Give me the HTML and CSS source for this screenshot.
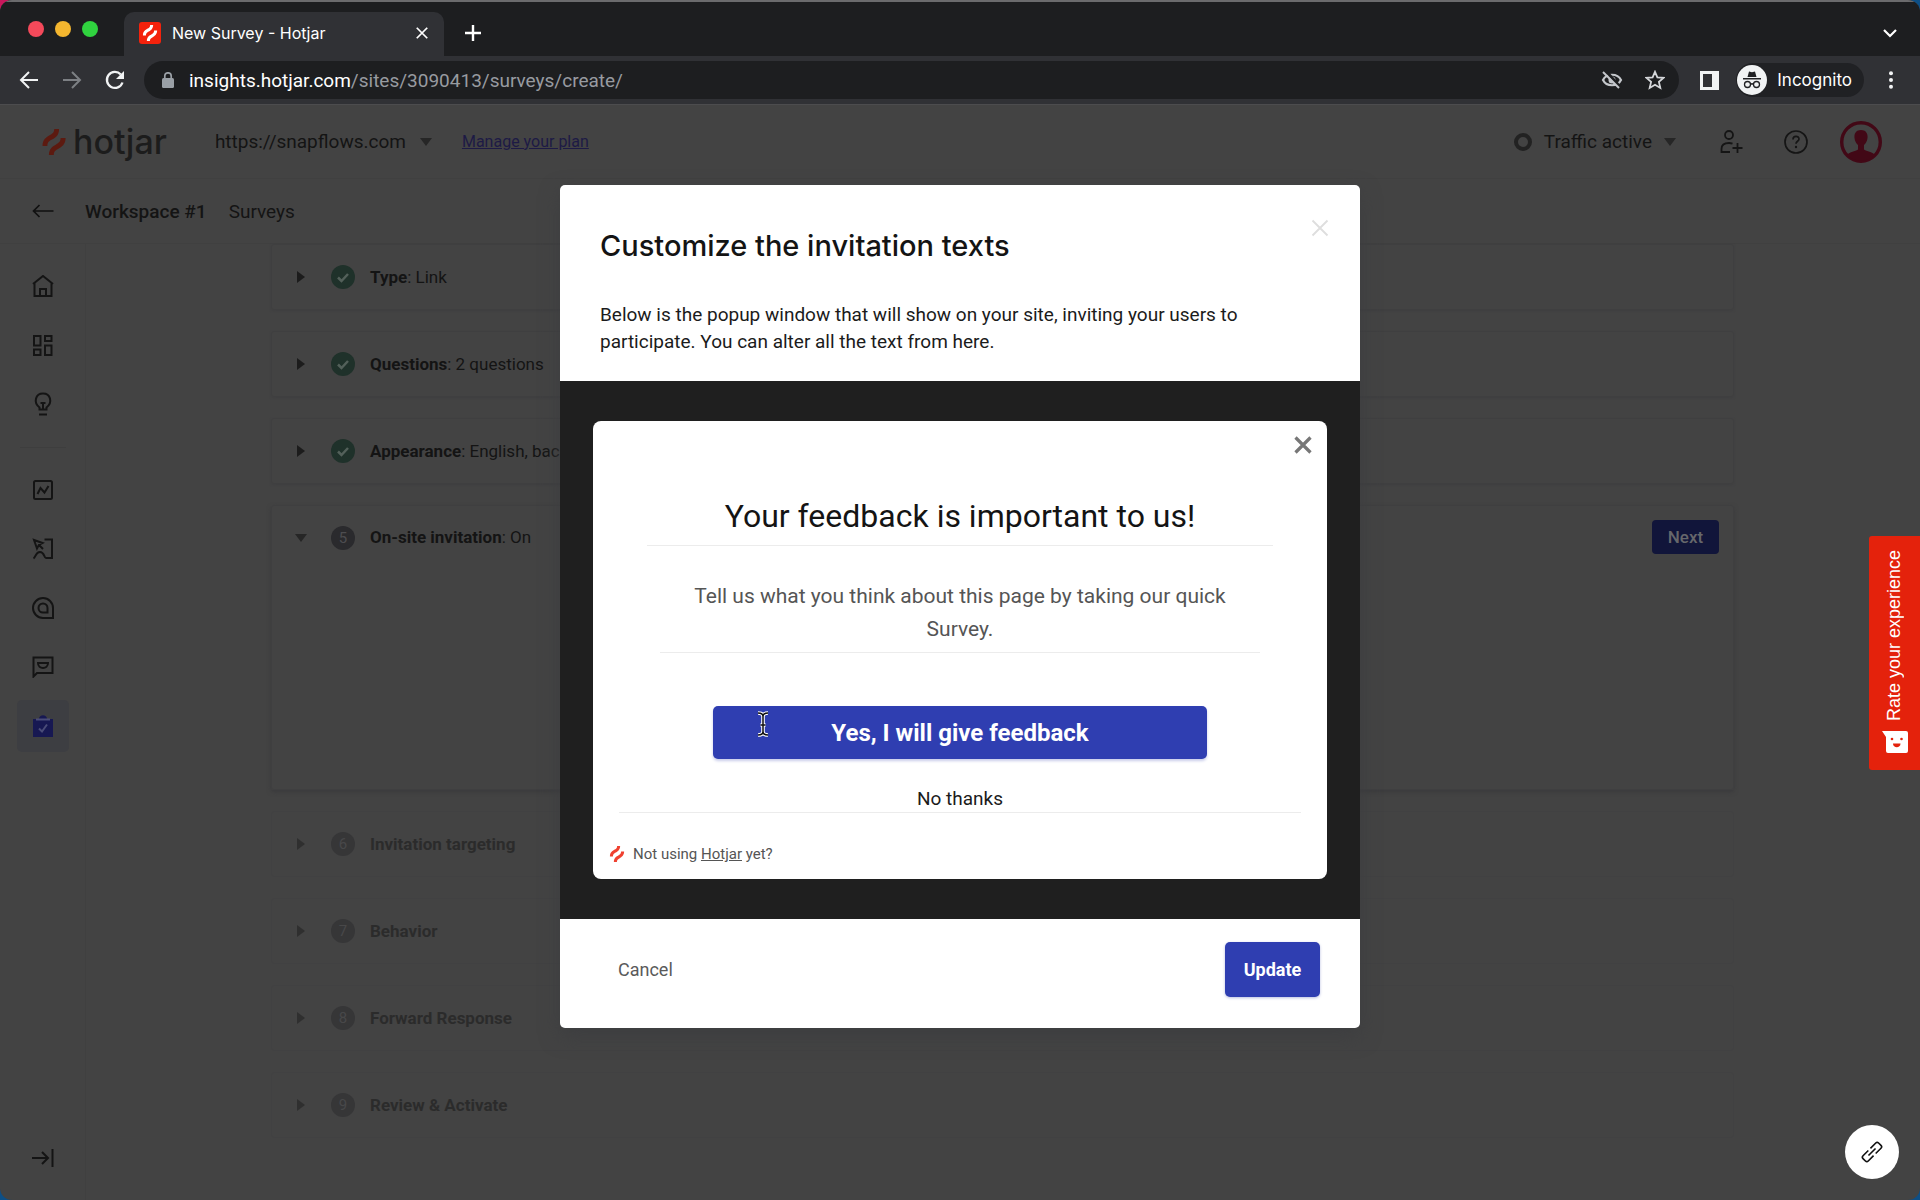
FILE: index.html
```html
<!DOCTYPE html>
<html lang="en">
<head>
<meta charset="utf-8">
<title>New Survey - Hotjar</title>
<link rel="stylesheet" href="styles.css">
</head>
<body>
<svg class="defs" aria-hidden="true">
  <symbol id="mark" viewBox="0 0 24 24"><path d="M10.1 9.8C12.900 8.300 16.700 6.200 16.700 0h-4.500c0 3.400-1.800 4.400-4.300 5.800C5.200 7.400 1.400 9.500 1.400 15.600h4.500c0-3.400 1.700-4.400 4.200-5.800zM18.100 8.400c0 3.400-1.700 4.400-4.200 5.800-2.800 1.500-6.600 3.700-6.600 9.800h4.500c0-3.400 1.800-4.400 4.300-5.800 2.800-1.500 6.600-3.700 6.600-9.800z" fill="currentColor"/></symbol>
  <symbol id="x" viewBox="0 0 16 16"><path d="M2 2l12 12M14 2L2 14" fill="none" stroke="currentColor"/></symbol>
  <symbol id="done" viewBox="0 0 24 24"><circle cx="12" cy="12" r="12" fill="#1f312a"/><path d="M7 12.500l3.500 3.500L17 9" fill="none" stroke="#53605a" stroke-width="2.500"/></symbol>
</svg>
<div class="browser">
  <header class="tabstrip">
    <div class="lights"><i class="light red"></i><i class="light yellow"></i><i class="light green"></i></div>
    <div class="tab">
      <span class="favicon"><svg width="16" height="16"><use href="#mark"/></svg></span>
      <span class="tab-title">New Survey - Hotjar</span>
      <button class="bare" aria-label="Close tab"><svg class="tab-x" width="14" height="14"><use href="#x"/></svg></button>
    </div>
    <button class="bare new-tab" aria-label="New tab"><svg width="18" height="18" viewBox="0 0 18 18"><path d="M9 1v16M1 9h16" stroke="#fff" stroke-width="2.400"/></svg></button>
    <button class="bare tab-search" aria-label="Search tabs"><svg width="14" height="10" viewBox="0 0 14 10"><path d="M1 2l6 6 6-6" fill="none" stroke="#fff" stroke-width="2.200"/></svg></button>
  </header>
  <div class="toolbar">
    <button class="bare" aria-label="Back"><svg width="20" height="20" viewBox="0 0 20 20"><path d="M19 10H2M10 2L2 10l8 8" fill="none" stroke="#f1f3f4" stroke-width="2"/></svg></button>
    <button class="bare" aria-label="Forward"><svg width="20" height="20" viewBox="0 0 20 20"><path d="M1 10h17M10 2l8 8-8 8" fill="none" stroke="#7d8084" stroke-width="2"/></svg></button>
    <button class="bare" aria-label="Reload"><svg width="20" height="20" viewBox="0 0 20 20"><path d="M17.500 12.500A8 8 0 1 1 15.800 4.500" fill="none" stroke="#f1f3f4" stroke-width="2.300"/><path d="M19 1v8h-8z" fill="#f1f3f4"/></svg></button>
    <div class="address">
      <svg width="12" height="16" viewBox="0 0 12 16"><rect y="6" width="12" height="10" rx="1.500" fill="#9aa0a6"/><path d="M2.800 7V4a3.200 3.200 0 0 1 6.400 0v3" fill="none" stroke="#9aa0a6" stroke-width="1.700"/></svg>
      <span class="url"><b>insights.hotjar.com</b>/sites/3090413/surveys/create/</span>
      <svg width="22" height="20" viewBox="0 0 22 20"><path d="M2 10c3.500-7 14.500-7 18 0-3.500 7-14.500 7-18 0z" fill="none" stroke="#c4c7cb" stroke-width="2.200"/><circle cx="11" cy="10" r="3.500" fill="#c4c7cb"/><path d="M4 0l16 18" stroke="#1d1e20" stroke-width="3"/><path d="M2 2l16 16" stroke="#c4c7cb" stroke-width="2"/></svg>
      <svg class="star" width="20" height="20" viewBox="0 0 20 20"><path d="M10 1.800l2.400 5.600 6.100.5-4.600 4 1.400 6L10 14.700l-5.300 3.200 1.400-6-4.600-4 6.100-.5z" fill="none" stroke="#d5d7da" stroke-width="1.800"/></svg>
    </div>
    <svg width="19" height="19" viewBox="0 0 19 19"><path d="M0 0h19v19H0zM3 3v13h9V3z" fill="#f1f3f4" fill-rule="evenodd"/></svg>
    <div class="incognito">
      <svg width="30" height="30" viewBox="0 0 30 30"><circle cx="15" cy="15" r="15" fill="#f1f3f4"/><path d="M10.500 12l1.500-5.500 3 .8 3-.8 1.500 5.500zM6 13h18v1.600H6z" fill="#202124"/><g fill="none" stroke="#202124" stroke-width="1.300"><circle cx="10.500" cy="19.500" r="3"/><circle cx="19.500" cy="19.500" r="3"/><path d="M13.500 19.500q1.500-1.500 3 0"/></g></svg>
      <span>Incognito</span>
    </div>
    <button class="bare" aria-label="Menu"><svg width="4" height="18" viewBox="0 0 4 18"><g fill="#f1f3f4"><circle cx="2" cy="2.200" r="2"/><circle cx="2" cy="9" r="2"/><circle cx="2" cy="15.800" r="2"/></g></svg></button>
  </div>

  <div class="page">
    <div class="app">
      <div class="site-bar">
        <a class="brand" href="#"><svg width="26" height="26"><use href="#mark"/></svg><span>hotjar</span></a>
        <button class="bare site-pick">https://snapflows.com <i class="caret down"></i></button>
        <a class="plan" href="#">Manage your plan</a>
        <button class="bare traffic"><i class="ring"></i>Traffic active <i class="caret down"></i></button>
        <button class="bare invite" aria-label="Invite"><svg width="24" height="24" viewBox="0 0 24 24"><g fill="none" stroke="#151515" stroke-width="1.800"><circle cx="9" cy="5" r="4"/><path d="M10 22H1.500v-3c0-4 3-6 7.500-6 1.500 0 2.500.2 3.500.6M17.500 13v10M12.500 18h10"/></g></svg></button>
        <button class="bare" aria-label="Help"><svg width="24" height="24" viewBox="0 0 24 24"><g fill="none" stroke="#151515" stroke-width="1.700"><circle cx="12" cy="12" r="11"/><path d="M9 9.500c0-4 6-4 6-.5 0 2.300-3 2.300-3 4.800"/></g><circle cx="12" cy="17" r="1.200" fill="#151515"/></svg></button>
        <button class="bare account" aria-label="Account"><svg width="42" height="42" viewBox="0 0 42 42"><circle cx="21" cy="21" r="19.300" fill="none" stroke="#420816" stroke-width="3.400"/><path d="M21 9c-5 0-7 3.500-6.500 8 .3 3 1.700 5.500 3.500 7v4.500c-3 2-8 2-11 5.500a20 20 0 0 0 28 0c-3-3.500-8-3.500-11-5.500V24c1.800-1.500 3.200-4 3.500-7 .5-4.500-1.500-8-6.500-8z" fill="#420816"/></svg></button>
      </div>
      <nav class="crumbs">
        <a href="#" aria-label="Back to surveys"><svg width="22" height="14" viewBox="0 0 22 14"><path d="M21.500 7H2M7.500 1L1.500 7l6 6" fill="none" stroke="#111" stroke-width="1.700"/></svg></a>
        <a class="strong" href="#">Workspace #1</a>
        <a href="#">Surveys</a>
      </nav>
      <div class="body">
        <nav class="side">
          <a href="#" aria-label="Home"><svg width="22" height="22" viewBox="0 0 22 22"><path d="M1 9l10-8 10 8M2.500 8v13h17V8M8 21v-7h6v7"/></svg></a>
          <a href="#" aria-label="Dashboards"><svg width="22" height="22" viewBox="0 0 22 22"><path d="M2 2h6.500v9.500H2zM13 2h6.500v5H13zM13 11.500h6.500V21H13zM2 15.500h6.500V21H2z"/></svg></a>
          <a href="#" aria-label="Highlights"><svg width="22" height="24" viewBox="0 0 22 24"><path d="M7.500 17.500v-2c-6.500-5-4-14 3.500-14s10 9 3.500 14v2zM11 17v-6M8.500 11h5M7 22.500h8"/></svg></a>
          <hr>
          <a href="#" aria-label="Trends"><svg width="22" height="22" viewBox="0 0 22 22"><rect x="2" y="2" width="18" height="18" rx="1.500"/><path d="M5.500 15l3-6 4 4.500 4-6.500"/></svg></a>
          <a href="#" aria-label="Heatmaps"><svg width="22" height="22" viewBox="0 0 22 22"><path d="M2 2l8.500 3-3.600 1.900L5 10.500zM7 7l4 4M12.500 1.500H20V20h-6c-2 0-1.500-6-6-6s-4 5-6.500 6.500"/></svg></a>
          <a href="#" aria-label="Recordings"><svg width="22" height="22" viewBox="0 0 22 22"><path d="M21 21H11A10 10 0 1 1 21 11zM15.500 15.500H11a4.500 4.500 0 1 1 4.500-4.500z"/></svg></a>
          <a href="#" aria-label="Feedback"><svg width="22" height="22" viewBox="0 0 22 22"><path d="M1.500 20.500V1.500h19V17H5zM6 7h10c0 6.500-10 6.500-10 0z"/></svg></a>
          <a class="current" href="#" aria-label="Surveys"><svg width="20" height="22" viewBox="0 0 20 22"><path class="solid" d="M0 4h6c0-5 8-5 8 0h6v18H0z"/><path class="tick" d="M6 13.500l3 3 5-7M3 4.500h14"/></svg></a>
          <a class="expand" href="#" aria-label="Expand"><svg width="22" height="18" viewBox="0 0 22 18"><path d="M0 9h16M10 3l6 6-6 6M20.500 0v18"/></svg></a>
        </nav>
        <main class="steps">
          <section class="step"><i class="caret right"></i><svg width="24" height="24"><use href="#done"/></svg><p><b>Type</b>: Link</p></section>
          <section class="step"><i class="caret right"></i><svg width="24" height="24"><use href="#done"/></svg><p><b>Questions</b>: 2 questions</p></section>
          <section class="step"><i class="caret right"></i><svg width="24" height="24"><use href="#done"/></svg><p><b>Appearance</b>: English, background</p></section>
          <section class="step open"><i class="caret down"></i><span class="num">5</span><p><b>On-site invitation</b>: On</p><button class="next">Next</button></section>
          <section class="step off"><i class="caret right"></i><span class="num">6</span><p><b>Invitation targeting</b></p></section>
          <section class="step off"><i class="caret right"></i><span class="num">7</span><p><b>Behavior</b></p></section>
          <section class="step off"><i class="caret right"></i><span class="num">8</span><p><b>Forward Response</b></p></section>
          <section class="step off"><i class="caret right"></i><span class="num">9</span><p><b>Review &amp; Activate</b></p></section>
        </main>
      </div>
    </div>

    <div class="overlay">
      <form class="modal" role="dialog" aria-labelledby="dlg-title">
        <div class="modal-head">
          <h1 id="dlg-title">Customize the invitation texts</h1>
          <p>Below is the popup window that will show on your site, inviting your users to participate. You can alter all the text from here.</p>
          <button type="button" class="bare modal-x" aria-label="Close"><svg width="20" height="20"><use href="#x"/></svg></button>
        </div>
        <div class="modal-body">
          <div class="popup">
            <button type="button" class="bare popup-x" aria-label="Dismiss"><svg width="20" height="20"><use href="#x"/></svg></button>
            <input class="field title" aria-label="Title" value="Your feedback is important to us!">
            <textarea class="field text" aria-label="Description" rows="2">Tell us what you think about this page by taking our quick Survey.</textarea>
            <button type="button" class="yes">Yes, I will give feedback</button>
            <input class="field no" aria-label="Decline" value="No thanks">
            <p class="credit"><svg width="16" height="16"><use href="#mark"/></svg><span>Not using <a href="#">Hotjar</a> yet?</span></p>
            <svg class="ibeam" width="14" height="26" viewBox="0 0 14 26"><path d="M2 2q5 0 5 3.500Q7 2 12 2M7 5v16M2 24q5 0 5-3.500Q7 24 12 24M4.500 14h5" fill="none" stroke="#fff" stroke-width="3.600"/><path d="M2 2q5 0 5 3.500Q7 2 12 2M7 5v16M2 24q5 0 5-3.500Q7 24 12 24M4.500 14h5" fill="none" stroke="#111" stroke-width="1.500"/></svg>
          </div>
        </div>
        <div class="modal-foot">
          <button type="button" class="bare cancel">Cancel</button>
          <button type="button" class="update">Update</button>
        </div>
      </form>
    </div>

    <button class="rate"><span>Rate your experience</span><svg width="26" height="22" viewBox="0 0 26 22"><path d="M0 0h24a2 2 0 0 1 2 2v18a2 2 0 0 1-2 2H6a2 2 0 0 1-2-2V6z" fill="#fff"/><g fill="#e4220c"><circle cx="10" cy="8" r="1.300"/><circle cx="19.500" cy="8" r="1.300"/><path d="M11 12.500h7.500c0 5-7.500 5-7.500 0z"/></g></svg></button>
    <button class="link" aria-label="Copy link"><svg width="22" height="22" viewBox="0 0 22 22"><g transform="rotate(-45 11 11)" fill="none" stroke="#111" stroke-width="1.600"><path d="M9.500 7.300H2a2 2 0 0 0-2 2v3.400a2 2 0 0 0 2 2h7.500M12.500 7.300H20a2 2 0 0 1 2 2v3.400a2 2 0 0 1-2 2h-7.500M6 11h10"/></g></svg></button>
  </div>
</div>
</body>
</html>
```
FILE: styles.css
```css
* { box-sizing: border-box; }
body {
  margin: 0;
  background: radial-gradient(circle at 0 0, #c9185c 20px, transparent 21px), #0d4f86;
  font-family: Roboto, "Liberation Sans", sans-serif;
  font-size: 19px;
  color: #141414;
}
button, input, textarea { font: inherit; color: inherit; }
a { color: inherit; text-decoration: none; }
p, h1 { margin: 0; }
svg { flex: none; display: block; }
.defs { position: absolute; width: 0; height: 0; }
.bare { background: none; border: 0; padding: 0; display: flex; align-items: center; }

.browser {
  min-height: 100vh;
  display: flex;
  flex-direction: column;
  border-radius: 12px;
  overflow: hidden;
  background: #434343;
}

/* Browser chrome */
.tabstrip {
  height: 56px;
  background: #1d1e20;
  border-top: 2px solid #6b6b6d;
  display: flex;
  align-items: center;
  padding: 0 23px 0 28px;
  color: #fff;
}
.lights { display: flex; gap: 11px; width: 96px; }
.light { width: 16px; height: 16px; border-radius: 50%; }
.red { background: #f4495a; }
.yellow { background: #f4b62f; }
.green { background: #30d33f; }
.tab {
  align-self: flex-end;
  width: 320px;
  height: 44px;
  border-radius: 10px 10px 0 0;
  background: #303135;
  display: flex;
  align-items: center;
  gap: 11px;
  padding: 0 15px 2px;
  font: 16px Inter, sans-serif;
}
.favicon { width: 22px; height: 22px; border-radius: 3px; background: #f4220c; display: grid; place-items: center; }
.tab-title { flex: 1; }
.tab-x { stroke-width: 2; }
.new-tab, .tab-search { margin-top: 8px; }
.new-tab { margin-left: 20px; }
.tab-search { margin-left: auto; }
.toolbar {
  height: 48px;
  background: #303135;
  display: flex;
  align-items: center;
  gap: 23px;
  padding: 0 27px 0 19px;
}
.address {
  flex: 1;
  height: 38px;
  margin: 0 -2px 0 -4px;
  border-radius: 19px;
  background: #1d1e20;
  display: flex;
  align-items: center;
  padding: 0 14px 0 18px;
}
.url { flex: 1; margin-left: 15px; color: #989ba0; }
.url b { color: #fff; font-weight: 400; }
.star { margin-left: 22px; }
.incognito {
  height: 34px;
  margin: 0 2px 0 -6px;
  padding: 0 12px 0 1px;
  border-radius: 17px;
  background: #202124;
  color: #fff;
  display: flex;
  align-items: center;
  gap: 10px;
  font: 17px Inter, sans-serif;
}

/* Dimmed application */
.page { flex: 1; position: relative; display: flex; flex-direction: column; border-top: 1px solid #4c4c4e; }
.app { flex: 1; display: flex; flex-direction: column; }
.site-bar {
  height: 74px;
  border-bottom: 1px solid #404040;
  display: flex;
  align-items: center;
  padding: 0 38px 0 41px;
  gap: 40px;
}
.brand { display: flex; align-items: center; gap: 6px; color: #5c1a10; }
.brand span { font: 500 34px/40px Inter, sans-serif; color: #1c1c1c; }
.site-pick { gap: 14px; margin-left: 8px; }
.plan { font-size: 16px; color: #1d1a45; text-decoration: underline; margin-left: -10px; }
.traffic { margin-left: auto; gap: 12px; }
.invite { margin-left: 4px; }
.account { margin-left: -8px; }
.ring { width: 18px; height: 18px; border-radius: 50%; border: 4px solid #222; }
.caret { border: 0 solid transparent; flex: none; }
.caret.down { border-width: 8px 6px 0; border-top-color: #262626; }
.caret.right { border-width: 6px 0 6px 8px; border-left-color: #1c1c1c; }
.crumbs { height: 65px; display: flex; align-items: center; gap: 22px; padding: 0 32px; border-bottom: 1px solid #404040; }
.crumbs .strong { font-weight: 500; margin-left: 9px; }
.body { flex: 1; display: flex; }
.side {
  width: 86px;
  border-right: 1px solid #404040;
  display: flex;
  flex-direction: column;
  align-items: center;
  gap: 7px;
  padding: 16px 0;
}
.side a { width: 52px; height: 52px; border-radius: 5px; display: grid; place-items: center; }
.side svg { fill: none; stroke: #141414; stroke-width: 2; }
.side hr { width: 46px; height: 1px; margin: 10px 0 9px; border: 0; background: #3e3e3e; }
.side .current { background: #3d3e42; }
.side .solid { fill: #171852; stroke: none; }
.side .tick { stroke: #4a4c78; stroke-width: 2; }
.side .expand { margin-top: auto; }
.steps { flex: 1; display: flex; flex-direction: column; gap: 21px; padding: 0 186px 50px 185px; }
.step {
  min-height: 66px;
  border: 1px solid #3f3f40;
  border-radius: 3px;
  box-shadow: 0 1px 2px #3f3f40;
  display: flex;
  align-items: center;
  padding: 0 14px 0 23px;
}
.step .caret.right { margin: 0 4px 0 2px; }
.step > .caret + * { margin: 0 15px 0 22px; }
.step > .caret.down + * { margin-left: 24px; }
.step p { font-size: 17px; flex: 1; white-space: nowrap; }
.step b { font-weight: 700; }
.step.open { min-height: 285px; align-items: flex-start; box-shadow: 0 2px 4px #3a3a3c; }
.step.open > .caret { margin-top: 28px; }
.step.open .num { margin-top: 20px; }
.step.open p { margin-top: 21px; }
.num {
  width: 24px;
  height: 24px;
  border-radius: 50%;
  background: #2a2a2d;
  color: #4d4d50;
  font: 15px/24px Roboto, sans-serif;
  text-align: center;
}
.next {
  width: 67px;
  height: 34px;
  margin-top: 14px;
  padding: 0;
  border: 0;
  border-radius: 4px;
  background: #11153a;
  color: #66676b;
  font-size: 17px;
  font-weight: 500;
}
.step.off { border-color: #414142; box-shadow: none; }
.step.off > * { opacity: .5; }

/* Dialog */
.overlay { position: absolute; inset: 0; display: flex; justify-content: center; align-items: flex-start; padding-top: 80px; }
.modal { width: 800px; max-width: 100%; border-radius: 5px; overflow: hidden; background: #fff; color: #1b1b1b; box-shadow: 0 8px 20px #3d3e40; }
.modal-head { position: relative; padding: 41px 40px 26px; }
.modal-head h1 { font: 500 29px/40px Inter, sans-serif; color: #141414; }
.modal-head p { margin-top: 35px; padding-right: 80px; line-height: 27px; }
.modal-x { position: absolute; top: 33px; right: 30px; color: #dedede; stroke-width: 1.500; }
.modal-body { background: #1f1f1f; padding: 40px 33px; }
.popup {
  position: relative;
  border-radius: 8px;
  background: #fff;
  padding: 66px 26px 15px;
  display: flex;
  flex-direction: column;
  align-items: center;
}
.popup-x { position: absolute; top: 14px; right: 14px; color: #777; stroke-width: 2.600; }
.field { border: 0; border-bottom: 1px solid #ececec; background: none; text-align: center; padding: 0; outline: 0; }
.field.title { width: 626px; height: 59px; font-size: 32px; color: #141414; }
.field.text { width: 600px; height: 81px; margin-top: 26px; padding: 8px 0 6px; line-height: 33px; font-size: 21px; color: #555; resize: none; overflow: hidden; }
.field.no { width: 100%; height: 28px; margin-top: 26px; }
.yes {
  width: 494px;
  height: 53px;
  margin-top: 53px;
  border: 0;
  border-radius: 5px;
  background: #2f3eb1;
  box-shadow: 0 2px 3px #c9cdea;
  color: #fff;
  font-size: 24px;
  font-weight: 700;
}
.credit { align-self: flex-start; display: flex; align-items: center; gap: 8px; margin: 31px 0 0 -10px; font-size: 15px; line-height: 20px; color: #555; }
.credit svg { color: #ef4130; }
.credit a { text-decoration: underline; }
.ibeam { position: absolute; left: 163px; top: 290px; }
.modal-foot { display: flex; justify-content: space-between; align-items: center; padding: 23px 40px 31px; }
.cancel { padding: 0 18px; color: #5a5a5a; font-size: 18px; }
.update { width: 95px; height: 55px; padding: 0; border: 0; border-radius: 5px; background: #2f3eb1; box-shadow: 0 1px 3px #b9bee0; color: #fff; font-size: 18px; font-weight: 700; }

/* Floating widgets */
.rate {
  position: absolute;
  right: 0;
  top: 431px;
  width: 51px;
  height: 234px;
  padding: 14px 0 17px;
  border: 0;
  border-radius: 3px 0 0 3px;
  background: #e4220c;
  color: #fff;
  font: 18px "Liberation Sans", Arial, sans-serif;
  display: flex;
  flex-direction: column;
  align-items: center;
  justify-content: space-between;
}
.rate span { writing-mode: vertical-rl; transform: rotate(180deg); }
.link { position: absolute; right: 21px; bottom: 21px; width: 54px; height: 54px; padding: 0; border: 0; border-radius: 50%; background: #fff; display: grid; place-items: center; }
```
